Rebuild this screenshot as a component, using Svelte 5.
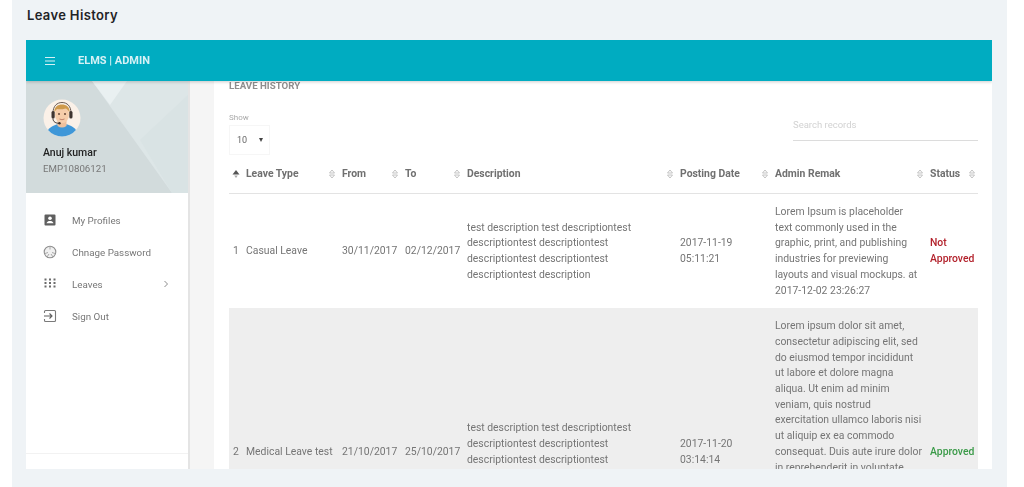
<script lang="ts">
  const menu = [
    { label: 'My Profiles', icon: 'profile' },
    { label: 'Chnage Password', icon: 'lock' },
    { label: 'Leaves', icon: 'grid', arrow: true },
    { label: 'Sign Out', icon: 'exit' },
  ];

  const columns = [
    { label: '', width: 13 },
    { label: 'Leave Type', width: 96 },
    { label: 'From', width: 63 },
    { label: 'To', width: 62 },
    { label: 'Description', width: 213 },
    { label: 'Posting Date', width: 95 },
    { label: 'Admin Remak', width: 155 },
    { label: 'Status', width: 52 },
  ];

  const description = [
    'test description test descriptiontest',
    'descriptiontest descriptiontest',
    'descriptiontest descriptiontest',
    'descriptiontest description',
  ];

  const rows = [
    {
      id: 1,
      type: 'Casual Leave',
      from: '30/11/2017',
      to: '02/12/2017',
      date: '2017-11-19',
      time: '05:11:21',
      remark:
        'Lorem Ipsum is placeholder text commonly used in the graphic, print, and publishing industries for previewing layouts and visual mockups. at 2017-12-02 23:26:27',
      status: 'Not Approved',
    },
    {
      id: 2,
      type: 'Medical Leave test',
      from: '21/10/2017',
      to: '25/10/2017',
      date: '2017-11-20',
      time: '03:14:14',
      remark:
        'Lorem ipsum dolor sit amet, consectetur adipiscing elit, sed do eiusmod tempor incididunt ut labore et dolore magna aliqua. Ut enim ad minim veniam, quis nostrud exercitation ullamco laboris nisi ut aliquip ex ea commodo consequat. Duis aute irure dolor in reprehenderit in voluptate velit esse cillum dolore eu fugiat nulla pariatur. Excepteur sint occaecat cupidatat non proident, sunt in culpa qui officia deserunt mollit anim id est laborum. at 2017-12-02 23:26:27',
      status: 'Approved',
    },
  ];
</script>

<div class="panel">
  <h1 class="title">Leave History</h1>

  <div class="app">
    <header class="topbar">
      <svg class="burger" viewBox="0 0 12 10" width="12" height="10">
        <path d="M1 1.5h10M1 5h10M1 8.5h10" stroke="#d5f1f5" stroke-width="1.1" fill="none" />
      </svg>
      <span class="brand">ELMS | ADMIN</span>
    </header>

    <div class="body">
      <aside class="sidebar">
        <div class="profile">
          <svg class="profile-bg" viewBox="0 0 162 112" preserveAspectRatio="none">
            <path d="M66 0H162V112H146Z" fill="#dde6e7" />
            <path d="M66 0H101L84 24Z" fill="#e9f0f1" />
            <path d="M114 59L162 14V112H146Z" fill="#d9e3e4" />
          </svg>
          <svg class="avatar" viewBox="0 0 38 38" width="38" height="38">
            <circle cx="19" cy="19" r="18.5" fill="#fbf1e8" />
            <path d="M5 31c4-5 9-6 14-6s10 1 14 6a18.500 18.500 0 0 1-28 0Z" fill="#3f97d8" />
            <path d="M14.500 22h9v5q-4.500 3-9 0Z" fill="#efc09c" />
            <ellipse cx="19" cy="15.500" rx="7" ry="8.800" fill="#f6cdaa" />
            <path d="M11.500 14c-1-6 3.500-8.500 7.500-8.500s8.500 2.500 7.500 8.500c-1-3-3-4.500-4-4.500-3 1-7 1-8 .5-1.500.5-2.500 2-3 4Z" fill="#cf9a4c" />
            <path d="M10 14C10 7 14 3.500 19 3.500S28 7 28 14" stroke="#5a4a42" stroke-width=".9" fill="none" />
            <rect x="8.500" y="12" width="3.200" height="7.500" rx="1.500" fill="#3f3531" />
            <rect x="26.300" y="12" width="3.200" height="7.500" rx="1.500" fill="#3f3531" />
            <path d="M10 19.500c0 3.500 3 4.800 6 4.800" stroke="#3f3531" stroke-width="1" fill="none" />
            <circle cx="16.500" cy="24.300" r="1.200" fill="#3f3531" />
            <circle cx="16" cy="15" r=".9" fill="#5a3a2a" />
            <circle cx="22" cy="15" r=".9" fill="#5a3a2a" />
            <path d="M16.500 20q2.500 1.500 5 0" stroke="#b5705a" stroke-width=".8" fill="none" />
          </svg>
          <div class="name">Anuj kumar</div>
          <div class="emp">EMP10806121</div>
        </div>

        <nav class="menu">
          {#each menu as item}
            <div class="menu-item">
              <svg class="menu-icon" viewBox="0 0 14 14" width="14" height="14">
                {#if item.icon === 'profile'}
                  <path d="M2.500 1.500h9a1 1 0 0 1 1 1v9a1 1 0 0 1-1 1h-9a1 1 0 0 1-1-1v-9a1 1 0 0 1 1-1Z" fill="#5f5f5f" />
                  <circle cx="7" cy="5.300" r="1.800" fill="#fff" />
                  <path d="M3.500 10.300c.5-1.800 2-2.400 3.500-2.400s3 .6 3.500 2.400Z" fill="#fff" />
                {:else if item.icon === 'lock'}
                  <circle cx="7" cy="7" r="5.800" fill="#f0f0f0" stroke="#8f8f8f" stroke-width="1.100" />
                  <path d="M7 1.500v3M2 8.500l3-1M12 8.500l-3-1M4 12l2-3M10 12l-2-3" stroke="#a0a0a0" stroke-width=".9" fill="none" />
                {:else if item.icon === 'grid'}
                  {#each [2.500, 6, 9.500] as y}
                    {#each [2.500, 7, 11.500] as x}
                      <rect x={x - 1} y={y - 1} width="2" height="2" fill="#6b6b6b" />
                    {/each}
                  {/each}
                {:else}
                  <path d="M1.500 4V2.500a1 1 0 0 1 1-1h9a1 1 0 0 1 1 1v9a1 1 0 0 1-1 1h-9a1 1 0 0 1-1-1V10" fill="none" stroke="#7a7a7a" stroke-width="1.100" />
                  <path d="M1 7h7.500M6.500 4.500L9 7l-2.500 2.500" fill="none" stroke="#5f5f5f" stroke-width="1.100" />
                {/if}
              </svg>
              <span class="menu-label">{item.label}</span>
              {#if item.arrow}
                <svg class="chevron" viewBox="0 0 6 8" width="6" height="8">
                  <path d="M1.500 1L4.500 4L1.500 7" fill="none" stroke="#8c8c8c" stroke-width="1" />
                </svg>
              {/if}
            </div>
          {/each}
        </nav>

        <div class="side-foot"></div>
      </aside>

      <div class="gutter"></div>

      <main class="content">
        <h2 class="heading">LEAVE HISTORY</h2>

        <div class="controls">
          <div class="show">
            <div class="show-label">Show</div>
            <div class="show-box">
              <span>10</span>
              <span class="caret"></span>
            </div>
          </div>
          <div class="search">Search records</div>
        </div>

        <table>
          <colgroup>
            {#each columns as col}
              <col style:width="{col.width}px" />
            {/each}
          </colgroup>
          <thead>
            <tr>
              {#each columns as col, i}
                <th class:first={i === 0}>
                  {#if i === 1}
                    <svg class="sort" viewBox="0 0 8 10" width="8" height="10">
                      <path d="M4 1L7.500 5.500H.5Z" fill="#555" />
                      <path d="M4 9L2.200 6.500h3.600Z" fill="#aaa" />
                    </svg>
                  {:else if i > 1}
                    <svg class="sort" viewBox="0 0 8 10" width="8" height="10">
                      <path d="M4 1L6.500 4H1.500ZM4 9L1.500 6H6.500Z" fill="none" stroke="#b5b5b5" stroke-width=".8" />
                    </svg>
                  {/if}
                  {col.label}
                  {#if i === 7}
                    <svg class="sort sort-tail" viewBox="0 0 8 10" width="8" height="10">
                      <path d="M4 1L6.500 4H1.500ZM4 9L1.500 6H6.500Z" fill="none" stroke="#b5b5b5" stroke-width=".8" />
                    </svg>
                  {/if}
                </th>
              {/each}
            </tr>
          </thead>
          <tbody>
            {#each rows as row, i}
              <tr class:odd={i % 2 === 1}>
                <td>{row.id}</td>
                <td class="nowrap">{row.type}</td>
                <td class="nowrap">{row.from}</td>
                <td class="nowrap">{row.to}</td>
                <td class="nowrap">
                  {#each description as line}
                    <div>{line}</div>
                  {/each}
                </td>
                <td>{row.date}<br />{row.time}</td>
                <td class="remark">{row.remark}</td>
                <td class={row.status === 'Approved' ? 'ok' : 'bad'}>{row.status}</td>
              </tr>
            {/each}
          </tbody>
        </table>
      </main>
    </div>
  </div>
</div>

<style>
  :global(body) {
    margin: 0;
    background: #fff;
    font-family: Roboto, "Liberation Sans", sans-serif;
  }

  .panel {
    box-sizing: border-box;
    width: 995px;
    height: 487px;
    margin-left: 12px;
    padding: 0 15px 0 14px;
    background: #eff3f6;
    overflow: hidden;
  }

  .title {
    margin: 0;
    height: 40px;
    padding-left: 1px;
    font: 600 13px/31px Inter, sans-serif;
    letter-spacing: 0.35px;
    color: #1f2327;
  }

  .app {
    height: 429px;
    display: flex;
    flex-direction: column;
    background: #fff;
    overflow: hidden;
    filter: blur(0.45px);
  }

  .topbar {
    position: relative;
    z-index: 2;
    flex: 0 0 41px;
    display: flex;
    align-items: center;
    gap: 22px;
    padding-left: 18px;
    background: #00acc1;
    box-shadow: 0 1px 3px rgba(0, 0, 0, 0.2);
  }

  .brand {
    font-size: 11px;
    font-weight: 700;
    color: #d5f1f5;
  }

  .body {
    flex: 1;
    min-height: 0;
    display: flex;
  }

  .sidebar {
    flex: 0 0 162px;
    display: flex;
    flex-direction: column;
    border-right: 2px solid #e4e4e4;
  }

  .profile {
    position: relative;
    box-sizing: border-box;
    height: 112px;
    padding: 18px 0 0 17px;
    background: #d2dbdc;
  }

  .profile-bg {
    position: absolute;
    inset: 0;
    width: 100%;
    height: 100%;
  }

  .avatar,
  .name,
  .emp {
    position: relative;
    display: block;
  }

  .name {
    margin-top: 8px;
    font-size: 10.500px;
    font-weight: 500;
    line-height: 16px;
    color: #222;
  }

  .emp {
    font-size: 9.700px;
    line-height: 16px;
    color: #777;
  }

  .menu {
    padding-top: 11px;
  }

  .menu-item {
    position: relative;
    height: 32px;
    display: flex;
    align-items: center;
    gap: 15px;
    padding-left: 17px;
    font-size: 9.800px;
    color: #777;
  }

  .chevron {
    position: absolute;
    right: 19px;
  }

  .side-foot {
    margin-top: auto;
    height: 15px;
    border-top: 1px solid #f2f2f2;
  }

  .gutter {
    flex: 0 0 24px;
    background: #f5f5f5;
  }

  .content {
    flex: 1;
    min-width: 0;
    padding: 0 14px 0 15px;
    background: #fff;
    overflow: hidden;
  }

  .heading {
    margin: 0;
    font-size: 9.700px;
    font-weight: 700;
    line-height: 10px;
    color: #8f8f8f;
  }

  .controls {
    display: flex;
    justify-content: space-between;
    height: 68px;
  }

  .show {
    padding-top: 21px;
  }

  .show-label {
    font-size: 8px;
    line-height: 11px;
    color: #aaa;
  }

  .show-box {
    box-sizing: border-box;
    width: 41px;
    height: 30px;
    margin-top: 2px;
    display: flex;
    align-items: center;
    justify-content: space-between;
    padding: 0 6px 0 7px;
    border: 1px solid #f6f6f6;
    font-size: 9px;
    color: #666;
  }

  .caret {
    width: 0;
    height: 0;
    border: 2.500px solid transparent;
    border-top: 4px solid #444;
    border-bottom: 0;
  }

  .search {
    box-sizing: border-box;
    width: 185px;
    height: 30px;
    margin-top: 20px;
    padding-top: 8px;
    border-bottom: 1px solid #dcdcdc;
    font-size: 9.500px;
    line-height: 12px;
    color: #d2d2d2;
  }

  table {
    width: 749px;
    table-layout: fixed;
    border-collapse: collapse;
    font-size: 10.400px;
    line-height: 15.700px;
    color: #757575;
  }

  th {
    height: 30px;
    padding: 0 4px 4px;
    border-bottom: 1px solid #e3e3e3;
    font-weight: 700;
    text-align: left;
    white-space: nowrap;
    color: #707070;
  }

  th.first {
    padding: 0;
  }

  .sort {
    position: absolute;
    margin: 3px 0 0 -14.500px;
  }

  .sort-tail {
    margin-left: 8px;
  }

  td {
    padding: 10px 4px;
    vertical-align: middle;
  }

  .nowrap {
    white-space: nowrap;
  }

  .remark {
    padding-right: 3.500px;
  }

  tr.odd td {
    background: #eeeeee;
  }

  .bad {
    font-weight: 500;
    color: #b3222c;
  }

  .ok {
    font-weight: 500;
    color: #3a9a48;
  }
</style>
